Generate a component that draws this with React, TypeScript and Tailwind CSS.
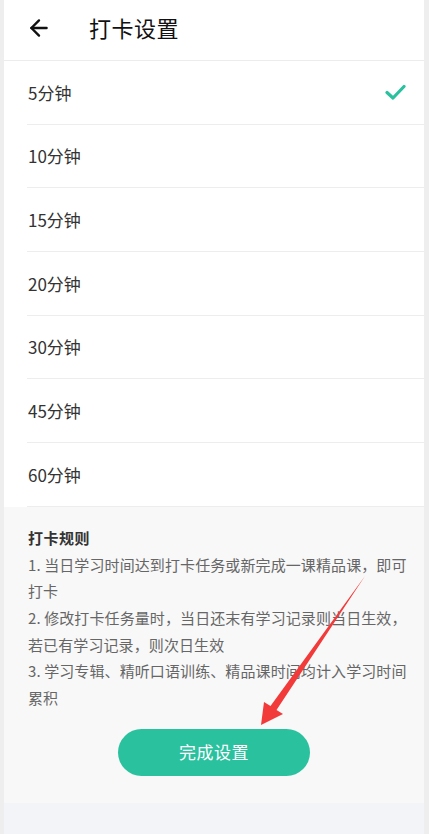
import { ArrowLeft } from 'lucide-react';

const options = ['5分钟', '10分钟', '15分钟', '20分钟', '30分钟', '45分钟', '60分钟'];

const ruleLines = [
  '1. 当日学习时间达到打卡任务或新完成一课精品课，即可',
  '打卡',
  '2. 修改打卡任务量时，当日还末有学习记录则当日生效，',
  '若已有学习记录，则次日生效',
  '3. 学习专辑、精听口语训练、精品课时间均计入学习时间',
  '累积',
];

export default function App() {
  const selected = 0;

  return (
    <div
      className="relative w-[429px] h-[834px] overflow-hidden bg-[#eeeeee] pl-[4px] pr-[5px]"
      style={{ fontFamily: '"Noto Sans CJK SC", "Noto Sans", Roboto, sans-serif' }}
    >
      <div className="flex flex-col h-full">
        {/* Header */}
        <div className="h-[61px] pb-[5px] flex items-center bg-white border-b border-[#ececec]">
          <ArrowLeft className="ml-[22px] w-[26px] h-[26px] text-[#111]" strokeWidth={2.2} />
          <h1 className="ml-[37px] text-[22px] text-[#111] tracking-[0.5px]">打卡设置</h1>
        </div>

        {/* Options */}
        <div className="bg-white">
          {options.map((opt, i) => (
            <div key={opt} className="pl-[23px]">
              <div className="h-[63.7px] flex items-center justify-between border-b border-[#ededed] pr-[20px]">
                <span className="pl-[1px] text-[17px] text-[#333]">{opt}</span>
                {i === selected && (
                  <svg width="22" height="18" viewBox="0 0 22 18" className="mr-[-2px]">
                    <path d="M3 9.5 L9 15 L20 3.5" fill="none" stroke="#2ac19f" strokeWidth="3.2" strokeLinecap="round" strokeLinejoin="round" />
                  </svg>
                )}
              </div>
            </div>
          ))}
        </div>

        {/* Rules */}
        <div className="flex-1 bg-[#f8f8f8] pt-[18px] pl-[24px] flex flex-col">
          <h2 className="text-[15px] font-bold text-[#333] leading-[26.7px] tracking-[0.5px]">打卡规则</h2>
          {ruleLines.map((line) => (
            <p key={line} className="text-[15px] text-[#666] leading-[26.7px] whitespace-nowrap tracking-[0.1px]">
              {line}
            </p>
          ))}
          <div className="flex justify-center pr-[24px] mt-[17px]">
            <button className="w-[192px] h-[47px] rounded-full bg-[#2ac19f] text-white text-[17px] tracking-[0.5px]">
              完成设置
            </button>
          </div>
        </div>

        <div className="h-[31px] bg-[#f2f4f7]" />
      </div>

      {/* Annotation arrow */}
      <svg className="absolute inset-0 pointer-events-none" width="429" height="834" viewBox="0 0 429 834">
        <polygon
          points="365,576 276.5,710 283,714 261,725 264,702 270.5,706"
          fill="#f23a3a"
        />
      </svg>
    </div>
  );
}
